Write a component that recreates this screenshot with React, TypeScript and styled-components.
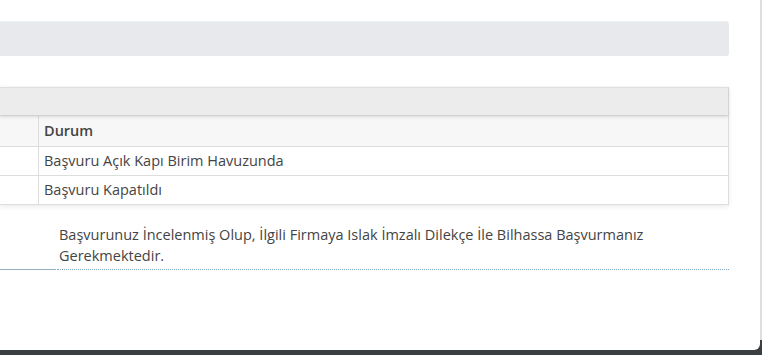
import React from "react";
import styled, { createGlobalStyle } from "styled-components";

const Global = createGlobalStyle`
  html, body { margin: 0; padding: 0; }
  body {
    background: #3b3e41;
    font-family: "Open Sans", "Noto Sans", sans-serif;
    overflow: hidden;
  }
`;

const Stage = styled.div`
  display: flex;
  align-items: flex-start;
  width: 762px;
  height: 355px;
`;

const Modal = styled.div`
  width: 760px;
  height: 350px;
  background: #ffffff;
  border-bottom-right-radius: 6px;
  box-sizing: border-box;
  padding: 21px 31px 0 0;
  display: flex;
  flex-direction: column;
`;

const ScrollStrip = styled.div`
  width: 2px;
  height: 340px;
  background: #dcdedf;
`;

const InfoBar = styled.div`
  height: 35px;
  background: #e7e9ec;
  border-radius: 0 3px 3px 0;
  border-top: 1px solid #edf0f2;
  box-sizing: border-box;
`;

const Panel = styled.div`
  margin-top: 31px;
  box-shadow: 0 2px 5px rgba(0, 0, 0, 0.08);
  border-right: 1px solid #dddddd;
`;

const PanelHeading = styled.div`
  height: 29px;
  background: #ececed;
  border-top: 1px solid #dfdfdf;
  border-bottom: 1px solid #d2d2d2;
  box-sizing: border-box;
  box-shadow: 0 1px 3px rgba(0, 0, 0, 0.12);
  position: relative;
`;

const Table = styled.table`
  width: 100%;
  border-collapse: collapse;
  font-size: 14.5px;
  color: #444;
`;

const Row = styled.tr<{ $head?: boolean }>`
  background: ${(p) => (p.$head ? "#f7f7f7" : "#ffffff")};
  height: ${(p) => (p.$head ? "30px" : "29px")};
  border-bottom: 1px solid #dddddd;
`;

const Cell = styled.td<{ $narrow?: boolean; $head?: boolean }>`
  padding: 0 5px;
  width: ${(p) => (p.$narrow ? "28px" : "auto")};
  border-right: ${(p) => (p.$narrow ? "1px solid #dddddd" : "none")};
  font-weight: ${(p) => (p.$head ? 600 : 400)};
  vertical-align: middle;
  line-height: 18px;
`;

const InfoList = styled.div`
  margin-top: 19px;
  display: grid;
  grid-template-columns: 56px 1fr;
`;

const Label = styled.div`
  border-bottom: 1px solid #96afc0;
`;

const Value = styled.div`
  margin-left: 1px;
  padding: 0 0 3px 2px;
  border-bottom: 1px dotted #7ea9c2;
  font-size: 14.5px;
  line-height: 21px;
  color: #444;
`;

const ValueText = styled.span`
  display: block;
  padding-right: 70px;
`;

export default function App() {
  return (
    <>
      <Global />
      <Stage>
        <Modal>
          <InfoBar />
          <Panel>
            <PanelHeading />
            <Table>
              <tbody>
                <Row $head>
                  <Cell $narrow />
                  <Cell $head>Durum</Cell>
                </Row>
                <Row>
                  <Cell $narrow />
                  <Cell>Başvuru Açık Kapı Birim Havuzunda</Cell>
                </Row>
                <Row>
                  <Cell $narrow />
                  <Cell>Başvuru Kapatıldı</Cell>
                </Row>
              </tbody>
            </Table>
          </Panel>
          <InfoList>
            <Label />
            <Value>
              <ValueText>
                Başvurunuz İncelenmiş Olup, İlgili Firmaya Islak İmzalı Dilekçe İle Bilhassa Başvurmanız Gerekmektedir.
              </ValueText>
            </Value>
          </InfoList>
        </Modal>
        <ScrollStrip />
      </Stage>
    </>
  );
}
